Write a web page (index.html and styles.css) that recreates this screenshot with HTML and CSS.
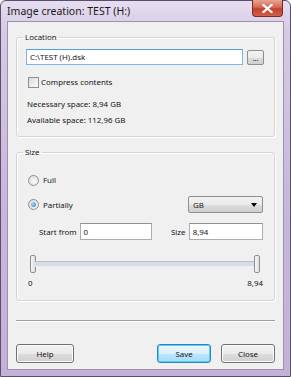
FILE: index.html
```html
<!DOCTYPE html>
<html>
<head>
<meta charset="utf-8">
<link rel="stylesheet" href="styles.css">
</head>
<body>
<div class="window">
  <div class="titlebar">
    <span class="title">Image creation: TEST (H:)</span>
    <div class="close-btn">
      <svg width="11" height="9" viewBox="0 0 11 9"><path d="M1.5 1 L9.5 8 M9.5 1 L1.5 8" stroke="#fff" stroke-width="2.2" stroke-linecap="square"/></svg>
    </div>
  </div>
  <div class="client">
    <fieldset class="group location">
      <legend>Location</legend>
      <div class="row path-row">
        <div class="textbox path">C:\TEST (H).dsk</div>
        <div class="browse">...</div>
      </div>
      <label class="check-row"><span class="checkbox"></span>Compress contents</label>
      <div class="info first">Necessary space: 8,94 GB</div>
      <div class="info">Available space: 112,96 GB</div>
    </fieldset>
    <fieldset class="group size">
      <legend>Size</legend>
      <label class="radio-row full"><span class="radio"></span>Full</label>
      <div class="row partial-row">
        <label class="radio-row"><span class="radio checked"></span>Partially</label>
        <div class="combo">GB<span class="arrow"></span></div>
      </div>
      <div class="row fields">
        <span class="flabel start-lbl">Start from</span>
        <div class="textbox small start">0</div>
        <span class="flabel size-lbl">Size</span>
        <div class="textbox small">8,94</div>
      </div>
      <div class="slider">
        <span class="thumb"></span>
        <span class="track"></span>
        <span class="thumb"></span>
      </div>
      <div class="row scale"><span>0</span><span>8,94</span></div>
    </fieldset>
    <div class="separator"></div>
    <div class="row buttons">
      <div class="btn help">Help</div>
      <div class="spacer"></div>
      <div class="btn default">Save</div>
      <div class="btn">Close</div>
    </div>
  </div>
</div>
</body>
</html>
```
FILE: styles.css
```css
html, body {
  margin: 0;
  padding: 0;
  background: #fff;
}
body {
  font-family: "Noto Sans", sans-serif;
  font-size: 7.9px;
  color: #151515;
}
.window {
  width: 291px;
  height: 377px;
  box-sizing: border-box;
  border: 1px solid #5b4f6b;
  border-radius: 6px 6px 0 0;
  background: linear-gradient(180deg, #e6def0 0px, #d6cae4 30px, #c8b7dc 200px, #c4b1d8 100%);
  display: flex;
  flex-direction: column;
  padding: 0 6px 6px 6px;
}
.titlebar {
  height: 20px;
  display: flex;
  align-items: flex-start;
  justify-content: space-between;
  flex-shrink: 0;
}
.title {
  font-size: 10.5px;
  color: #1a1a1a;
  padding-top: 3px;
  padding-left: 0;
}
.close-btn {
  width: 31px;
  height: 17px;
  margin-top: -1px;
  margin-right: 1px;
  border: 1px solid #7a2a22;
  border-top: none;
  border-radius: 0 0 4px 4px;
  background: linear-gradient(180deg, #e8a493 0%, #d26b55 45%, #c1412a 55%, #d2614a 100%);
  display: flex;
  align-items: center;
  justify-content: center;
  box-sizing: border-box;
}
.client {
  flex: 1;
  background: #f0f0f0;
  border: 1px solid #9c8fb0;
  display: flex;
  flex-direction: column;
  padding: 9px 8px 0 8px;
}
.row {
  display: flex;
  align-items: center;
}
.group {
  margin: 0;
  border: 1px solid #d5d5d5;
  border-radius: 3px;
  box-shadow: inset 1px 1px 0 #fff, 1px 1px 0 #fff;
  padding: 0 10px 0 9px;
  box-sizing: border-box;
  min-width: 0;
}
.group legend {
  padding: 0 2px;
  margin-left: -3px;
  line-height: 12px;
}
.location {
  height: 106px;
  padding-top: 5px;
}
.path-row {
  gap: 4px;
}
.textbox {
  height: 16px;
  box-sizing: border-box;
  border: 1px solid #abadb3;
  border-top-color: #8e9298;
  background: #fff;
  display: flex;
  align-items: center;
  padding-left: 3px;
  white-space: nowrap;
}
.path {
  flex: 1;
  border-color: #7eb4ea;
  border-top-color: #569de5;
}
.browse {
  width: 17px;
  height: 15px;
  box-sizing: border-box;
  border: 1px solid #8e8f8f;
  border-radius: 2px;
  background: linear-gradient(180deg, #f2f2f2 0%, #ebebeb 50%, #dddddd 51%, #cfcfcf 100%);
  display: flex;
  align-items: flex-end;
  justify-content: center;
  font-size: 7px;
  line-height: 10px;
  margin-top: 2px;
}
.check-row {
  display: flex;
  align-items: center;
  margin-top: 11px;
  margin-left: 2px;
  gap: 2px;
  line-height: 12px;
}
.checkbox {
  width: 11px;
  height: 11px;
  box-sizing: border-box;
  border: 1px solid #8f8f8f;
  background: linear-gradient(135deg, #dcdcdc, #fafafa);
  display: inline-block;
}
.info {
  margin-top: 4px;
  margin-left: 1px;
  line-height: 12px;
}
.info.first {
  margin-top: 10px;
}
.size {
  margin-top: 9px;
  height: 155px;
  padding-top: 16px;
  padding-left: 11px;
  padding-right: 11px;
}
.size legend {
  margin-left: -5px;
}
.radio-row {
  display: flex;
  align-items: center;
  gap: 4px;
  line-height: 12px;
}
.radio {
  width: 11px;
  height: 11px;
  box-sizing: border-box;
  border-radius: 50%;
  border: 1px solid #8f8f8f;
  background: radial-gradient(circle at 60% 60%, #fafafa, #d6d6d6);
  display: inline-block;
  position: relative;
}
.radio.checked::after {
  content: "";
  position: absolute;
  left: 2px;
  top: 2px;
  width: 5px;
  height: 5px;
  border-radius: 50%;
  background: radial-gradient(circle at 35% 35%, #a9dcf6, #2a7ec0);
}
.partial-row {
  justify-content: space-between;
  margin-top: 10px;
  height: 17px;
}
.combo {
  width: 75px;
  height: 17px;
  box-sizing: border-box;
  border: 1px solid #8e8f8f;
  border-radius: 2px;
  background: linear-gradient(180deg, #f2f2f2 0%, #ebebeb 50%, #dddddd 51%, #cfcfcf 100%);
  display: flex;
  align-items: center;
  justify-content: space-between;
  padding: 0 5px 0 4px;
}
.arrow {
  width: 0;
  height: 0;
  border-left: 3px solid transparent;
  border-right: 3px solid transparent;
  border-top: 4px solid #000;
}
.fields {
  margin-top: 10px;
  padding-left: 11px;
  white-space: nowrap;
}
.start-lbl {
  width: 41px;
}
.size-lbl {
  margin-left: 19px;
  width: 18px;
}
.textbox.small {
  width: 75px;
  height: 17px;
}
.textbox.start {
  width: 73px;
}
.slider {
  display: flex;
  align-items: center;
  margin: 15px 3px 0 2px;
  height: 18px;
}
.thumb {
  width: 6px;
  height: 18px;
  box-sizing: border-box;
  border: 1px solid #8e8f8f;
  border-radius: 2px;
  background: linear-gradient(90deg, #f7f7f7, #dcdcdc);
  flex-shrink: 0;
}
.track {
  flex: 1;
  height: 4px;
  background: #d5dde6;
  border-top: 1px solid #b5c0cc;
  border-bottom: 1px solid #e8eef3;
  margin: 0 -1px;
}
.scale {
  justify-content: space-between;
  margin-top: 4px;
  line-height: 12px;
}
.separator {
  margin-top: 19px;
  height: 1px;
  background: #a0a0a0;
  border-bottom: 1px solid #fff;
}
.buttons {
  margin-top: 22px;
  gap: 10px;
}
.spacer {
  flex: 1;
}
.btn {
  width: 54px;
  height: 19px;
  box-sizing: border-box;
  border: 1px solid #707070;
  border-radius: 3px;
  background: linear-gradient(180deg, #f2f2f2 0%, #ebebeb 50%, #dddddd 51%, #cfcfcf 100%);
  display: flex;
  align-items: center;
  justify-content: center;
  box-shadow: inset 0 0 0 1px #fcfcfc;
}
.btn.help {
  width: 58px;
}
.btn.default {
  border-color: #3c7fb1;
  background: linear-gradient(180deg, #eaf6fd 0%, #d9f0fc 50%, #bee6fd 51%, #a7d9f5 100%);
  box-shadow: inset 0 0 0 1px #48d5fd;
}
```
